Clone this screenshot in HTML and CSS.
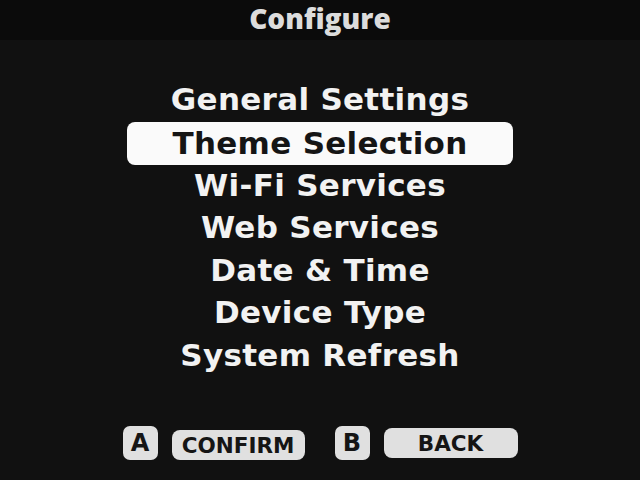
FILE: index.html
```html
<!DOCTYPE html>
<html>
<head>
<meta charset="utf-8">
<link rel="stylesheet" href="styles.css">
</head>
<body>
<div class="screen">
  <header class="header">Configure</header>
  <ul class="menu">
    <li class="item">General Settings</li>
    <li class="item selected">Theme Selection</li>
    <li class="item">Wi-Fi Services</li>
    <li class="item">Web Services</li>
    <li class="item">Date &amp; Time</li>
    <li class="item">Device Type</li>
    <li class="item">System Refresh</li>
  </ul>
  <footer class="footer">
    <div class="hint">
      <span class="key">A</span>
      <span class="label confirm">CONFIRM</span>
    </div>
    <div class="hint">
      <span class="key">B</span>
      <span class="label back">BACK</span>
    </div>
  </footer>
</div>
</body>
</html>
```

FILE: styles.css
```css
html, body {
  margin: 0;
  padding: 0;
  background: #111111;
}
.screen {
  width: 640px;
  height: 480px;
  display: flex;
  flex-direction: column;
  background: #111111;
  font-family: "DejaVu Sans", "Noto Sans", sans-serif;
  font-weight: bold;
  color: #f0f0f0;
}
.header {
  height: 40px;
  background: #0b0b0b;
  color: #dcdcdc;
  display: flex;
  align-items: center;
  justify-content: center;
  font-family: "Open Sans", "Noto Sans", sans-serif;
  font-size: 28px;
  font-weight: 800;
  padding-bottom: 5px;
  box-sizing: border-box;
}
.menu {
  list-style: none;
  margin: 0;
  padding: 0;
  margin-top: 38px;
  display: flex;
  flex-direction: column;
  align-items: center;
}
.item {
  width: 386px;
  height: 42.5px;
  display: flex;
  align-items: center;
  justify-content: center;
  font-size: 31px;
  letter-spacing: 0.3px;
  color: #f2f2f2;
  border-radius: 8px;
}
.item.selected {
  background: #fafafa;
  color: #151515;
  height: 43px;
  margin-top: 1px;
  margin-bottom: -1px;
}
.footer {
  margin-top: auto;
  margin-bottom: 20px;
  display: flex;
  justify-content: center;
  gap: 30px;
}
.hint {
  display: flex;
  align-items: center;
  gap: 14px;
}
.key {
  width: 35px;
  height: 34px;
  border-radius: 7px;
  background: #e0e0e0;
  color: #151515;
  display: flex;
  align-items: center;
  justify-content: center;
  font-size: 24px;
}
.label {
  height: 30px;
  border-radius: 8px;
  background: #e0e0e0;
  color: #151515;
  display: flex;
  align-items: center;
  justify-content: center;
  font-size: 21.5px;
}
.confirm { width: 133px; margin-top: 4px; }
.back { width: 134px; }
```
